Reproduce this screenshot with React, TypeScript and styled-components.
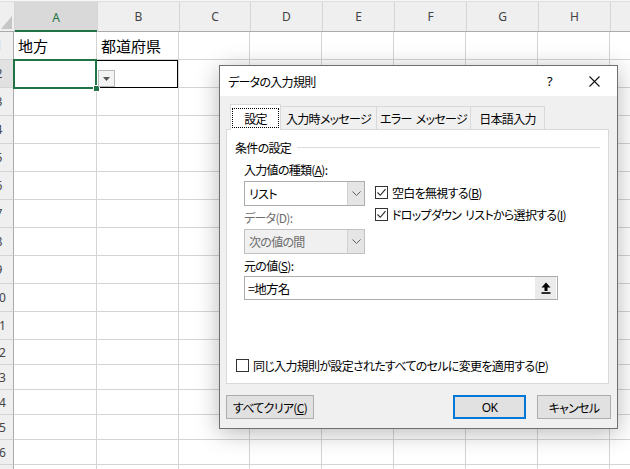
import React from 'react'
import styled, { createGlobalStyle, css } from 'styled-components'

const UI_FONT = `"Noto Sans CJK JP", "Noto Sans", sans-serif`
const GRID = '#d4d4d4'
const EXCEL_GREEN = '#217346'

const GlobalStyle = createGlobalStyle`
  html, body {
    margin: 0;
    padding: 0;
    background: #fff;
  }
  body {
    width: 630px;
    height: 469px;
    overflow: hidden;
    font-family: ${UI_FONT};
    font-feature-settings: 'palt';
  }
`

const columns = [
  { label: 'A', width: 83 },
  { label: 'B', width: 82 },
  { label: 'C', width: 71 },
  { label: 'D', width: 72 },
  { label: 'E', width: 72 },
  { label: 'F', width: 72 },
  { label: 'G', width: 72 },
  { label: 'H', width: 72 },
  { label: '', width: 40 },
]

const rowHeights = [28, 28, 28, 28, 28, 28, 28, 28, 28, 28, 28, 25, 25, 25, 25, 25, 25]

const cellText: Record<string, string> = {
  '1-0': '地方',
  '1-1': '都道府県',
}

export default function App() {
  return (
    <>
      <GlobalStyle />
      <Sheet>
        <HeaderRow>
          <Corner>
            <svg width="14" height="29" viewBox="0 0 14 29">
              <polygon points="12,14 12,27 1,27" fill="#c6c6c6" />
            </svg>
          </Corner>
          {columns.map((c, i) => (
            <ColHeader key={i} $w={c.width} $selected={c.label === 'A'}>
              {c.label}
            </ColHeader>
          ))}
        </HeaderRow>

        {rowHeights.map((h, r) => {
          const rowNo = r + 1
          return (
            <Row key={rowNo} $h={h}>
              <RowHeader $selected={rowNo === 2}>
                <RowNumber>{rowNo}</RowNumber>
              </RowHeader>
              {columns.map((c, ci) => (
                <Cell
                  key={ci}
                  $w={c.width}
                  $active={rowNo === 2 && ci === 0}
                  $boxed={rowNo === 2 && ci === 1}
                >
                  {cellText[`${rowNo}-${ci}`]}
                  {rowNo === 2 && ci === 0 && <FillHandle />}
                  {rowNo === 2 && ci === 1 && (
                    <CellDropdown>
                      <svg width="7" height="4" viewBox="0 0 7 4">
                        <polygon points="0,0 7,0 3.5,4" fill="#555" />
                      </svg>
                    </CellDropdown>
                  )}
                </Cell>
              ))}
            </Row>
          )
        })}

        <Dialog>
          <TitleBar>
            <Title>データの入力規則</Title>
            <TitleButton>?</TitleButton>
            <TitleButton>
              <svg width="11" height="11" viewBox="0 0 11 11">
                <path d="M0.5 0.5 L10.5 10.5 M10.5 0.5 L0.5 10.5" stroke="#111" strokeWidth="1.1" />
              </svg>
            </TitleButton>
          </TitleBar>

          <DialogBody>
            <TabStrip>
              <Tab $active $w={51}>
                <FocusLabel>設定</FocusLabel>
              </Tab>
              <Tab $w={97}>入力時メッセージ</Tab>
              <Tab $w={95}>エラー メッセージ</Tab>
              <Tab $w={75}>日本語入力</Tab>
            </TabStrip>

            <TabPanel>
              <SectionHeader>
                <span>条件の設定</span>
                <Rule />
              </SectionHeader>

              <Settings>
                <SettingsGrid>
                  <Column>
                    <FieldLabel $gap={6}>
                      入力値の種類(<u>A</u>):
                    </FieldLabel>
                    <Select>
                      <SelectValue>リスト</SelectValue>
                      <SelectArrow>
                        <Chevron />
                      </SelectArrow>
                    </Select>
                    <FieldLabel $gap={4} $disabled>
                      データ(D):
                    </FieldLabel>
                    <Select $disabled>
                      <SelectValue>次の値の間</SelectValue>
                      <SelectArrow>
                        <Chevron />
                      </SelectArrow>
                    </Select>
                  </Column>
                  <CheckColumn>
                    <CheckRow>
                      <CheckBox $checked>
                        <Tick />
                      </CheckBox>
                      <span>
                        空白を無視する(<u>B</u>)
                      </span>
                    </CheckRow>
                    <CheckRow>
                      <CheckBox $checked>
                        <Tick />
                      </CheckBox>
                      <span>
                        ドロップダウン リストから選択する(<u>I</u>)
                      </span>
                    </CheckRow>
                  </CheckColumn>
                </SettingsGrid>

                <FieldLabel $gap={4}>
                  元の値(<u>S</u>):
                </FieldLabel>
                <SourceInput>
                  <SourceValue>=地方名</SourceValue>
                  <CollapseButton>
                    <svg width="10" height="12" viewBox="0 0 10 12">
                      <path d="M5 0.5 L9.5 5.5 L6.5 5.5 L6.5 9 L3.5 9 L3.5 5.5 L0.5 5.5 Z" fill="#000" />
                      <rect x="0.5" y="10.2" width="9" height="1.6" fill="#000" />
                    </svg>
                  </CollapseButton>
                </SourceInput>
              </Settings>

              <Spacer />

              <ApplyRow>
                <CheckBox />
                <span>
                  同じ入力規則が設定されたすべてのセルに変更を適用する(<u>P</u>)
                </span>
              </ApplyRow>
            </TabPanel>

            <ButtonRow>
              <Button $w={88}>
                すべてクリア(<u>C</u>)
              </Button>
              <ButtonGap />
              <Button $w={73} $default>
                OK
              </Button>
              <Button $w={74}>キャンセル</Button>
            </ButtonRow>
          </DialogBody>
        </Dialog>
      </Sheet>
    </>
  )
}

const Chevron = () => (
  <svg width="9" height="5" viewBox="0 0 9 5">
    <path d="M0.5 0.5 L4.5 4.5 L8.5 0.5" fill="none" stroke="#606060" strokeWidth="1" />
  </svg>
)

const Tick = () => (
  <svg width="11" height="11" viewBox="0 0 11 11">
    <path d="M1.5 5.5 L4.3 8.3 L9.5 2.2" fill="none" stroke="#222" strokeWidth="1.1" />
  </svg>
)

const Sheet = styled.div`
  position: relative;
  width: 630px;
  height: 469px;
  overflow: hidden;
  padding-top: 2px;
  box-sizing: border-box;
  background: #f7f7f7;
`

const HeaderRow = styled.div`
  display: flex;
  height: 29px;
  background: #efefef;
  border-top: 1px solid #dedede;
  border-bottom: 1px solid #ababab;
  box-sizing: content-box;
  margin-top: -1px;
`

const Corner = styled.div`
  flex: 0 0 14px;
  box-sizing: border-box;
  border-right: 1px solid #d4d4d4;
  display: flex;
`

const ColHeader = styled.div<{ $w: number; $selected?: boolean }>`
  flex: 0 0 ${p => p.$w}px;
  box-sizing: border-box;
  border-right: 1px solid #d5d5d5;
  display: flex;
  align-items: center;
  justify-content: center;
  font-family: 'Noto Sans', 'Liberation Sans', sans-serif;
  font-size: 12px;
  color: #444;
  ${p =>
    p.$selected &&
    css`
      background: #d9d9d9;
      color: ${EXCEL_GREEN};
      box-shadow: inset 0 -2px 0 ${EXCEL_GREEN};
      margin-bottom: -1px;
    `}
`

const Row = styled.div<{ $h: number }>`
  display: flex;
  height: ${p => p.$h}px;
  background: #fff;
`

const RowHeader = styled.div<{ $selected?: boolean }>`
  flex: 0 0 14px;
  box-sizing: border-box;
  overflow: hidden;
  background: ${p => (p.$selected ? '#e1e1e1' : '#efefef')};
  border-right: 1px solid #ababab;
  border-bottom: 1px solid #d4d4d4;
  display: flex;
  align-items: center;
`

const RowNumber = styled.span`
  flex: 0 0 30px;
  margin-left: -16px;
  text-align: center;
  font-family: 'Noto Sans', 'Liberation Sans', sans-serif;
  font-size: 12px;
  color: #444;
`

const Cell = styled.div<{ $w: number; $active?: boolean; $boxed?: boolean }>`
  position: relative;
  flex: 0 0 ${p => p.$w}px;
  box-sizing: border-box;
  border-right: 1px solid ${GRID};
  border-bottom: 1px solid ${GRID};
  padding: 0 4px;
  display: flex;
  align-items: center;
  font-family: ${UI_FONT};
  font-size: 15px;
  color: #000;
  white-space: nowrap;

  ${p =>
    p.$active &&
    css`
      &::after {
        content: '';
        position: absolute;
        top: -1px;
        left: -1px;
        right: -1px;
        bottom: -2px;
        border: 2px solid ${EXCEL_GREEN};
        z-index: 2;
      }
    `}

  ${p =>
    p.$boxed &&
    css`
      &::before {
        content: '';
        position: absolute;
        top: 0;
        left: -1px;
        right: 0;
        bottom: -1px;
        border: 1px solid #000;
        z-index: 1;
      }
    `}
`

const FillHandle = styled.span`
  position: absolute;
  right: -4px;
  bottom: -5px;
  width: 5px;
  height: 5px;
  background: ${EXCEL_GREEN};
  border: 1px solid #fff;
  z-index: 3;
`

const CellDropdown = styled.span`
  position: absolute;
  left: 1px;
  top: 10px;
  width: 17px;
  height: 17px;
  box-sizing: border-box;
  background: #f3f3f3;
  border: 1px solid #b8b8b8;
  display: flex;
  align-items: center;
  justify-content: center;
  z-index: 4;
`

const Dialog = styled.div`
  position: absolute;
  left: 219px;
  top: 65px;
  width: 399px;
  height: 364px;
  box-sizing: border-box;
  border: 1px solid #707070;
  background: #f0f0f0;
  box-shadow: 0 4px 22px rgba(0, 0, 0, 0.28);
  display: flex;
  flex-direction: column;
  z-index: 10;
  font-family: ${UI_FONT};
  font-feature-settings: 'palt';
  font-size: 12px;
  letter-spacing: -0.7px;
  word-spacing: 2px;
  color: #000;
`

const TitleBar = styled.div`
  height: 30px;
  flex: 0 0 30px;
  background: #fff;
  display: flex;
  align-items: center;
`

const Title = styled.div`
  flex: 1;
  padding-left: 8px;
  font-size: 12px;
`

const TitleButton = styled.div`
  width: 45px;
  height: 30px;
  display: flex;
  align-items: center;
  justify-content: center;
  font-family: 'Noto Sans', sans-serif;
  font-size: 13px;
`

const DialogBody = styled.div`
  flex: 1;
  display: flex;
  flex-direction: column;
  padding: 8px 8px 9px 6px;
`

const TabStrip = styled.div`
  display: flex;
  align-items: flex-end;
  height: 25px;
  padding-left: 4px;
  position: relative;
  z-index: 1;
`

const Tab = styled.div<{ $w: number; $active?: boolean }>`
  box-sizing: border-box;
  width: ${p => p.$w}px;
  height: 23px;
  margin-left: -1px;
  border: 1px solid #d9d9d9;
  border-bottom: none;
  background: #f0f0f0;
  display: flex;
  align-items: center;
  justify-content: center;
  white-space: nowrap;
  font-size: 12px;

  &:first-child {
    margin-left: 0;
  }

  ${p =>
    p.$active &&
    css`
      height: 26px;
      margin-bottom: -1px;
      background: #fff;
      padding: 3px 1px 2px;
      align-items: stretch;
    `}
`

const FocusLabel = styled.span`
  flex: 1;
  border: 1px dotted #000;
  display: flex;
  align-items: center;
  justify-content: center;
`

const TabPanel = styled.div`
  height: 255px;
  box-sizing: border-box;
  background: #fff;
  border: 1px solid #d9d9d9;
  display: flex;
  flex-direction: column;
  padding: 0 8px;
`

const SectionHeader = styled.div`
  margin-top: 8px;
  height: 18px;
  display: flex;
  align-items: center;
  gap: 6px;
`

const Rule = styled.span`
  flex: 1;
  height: 1px;
  background: #dcdcdc;
`

const Settings = styled.div`
  padding-left: 9px;
  display: flex;
  flex-direction: column;
`

const SettingsGrid = styled.div`
  display: grid;
  grid-template-columns: 121px auto;
  column-gap: 10px;
`

const Column = styled.div`
  display: flex;
  flex-direction: column;
`

const FieldLabel = styled.div<{ $gap: number; $disabled?: boolean }>`
  margin-top: ${p => p.$gap}px;
  height: 16px;
  line-height: 16px;
  color: ${p => (p.$disabled ? '#6d6d6d' : '#000')};
  white-space: nowrap;
`

const Select = styled.div<{ $disabled?: boolean }>`
  margin-top: 3px;
  height: 25px;
  box-sizing: border-box;
  border: 1px solid ${p => (p.$disabled ? '#c2c2c2' : '#acacac')};
  background: ${p => (p.$disabled ? '#f0f0f0' : '#fff')};
  color: ${p => (p.$disabled ? '#6d6d6d' : '#000')};
  display: flex;
`

const SelectValue = styled.div`
  flex: 1;
  padding-left: 4px;
  display: flex;
  align-items: center;
`

const SelectArrow = styled.div`
  width: 16px;
  background: #e5e5e5;
  border-left: 1px solid #d0d0d0;
  display: flex;
  align-items: center;
  justify-content: center;
`

const CheckColumn = styled.div`
  margin-top: 25px;
  display: flex;
  flex-direction: column;
`

const CheckRow = styled.div`
  height: 22px;
  display: flex;
  align-items: center;
  gap: 4px;
  white-space: nowrap;
`

const CheckBox = styled.span<{ $checked?: boolean }>`
  width: 13px;
  height: 13px;
  flex: 0 0 13px;
  box-sizing: border-box;
  border: 1px solid #333;
  background: #fff;
  display: flex;
  align-items: center;
  justify-content: center;
`

const SourceInput = styled.div`
  margin-top: 2px;
  width: 314px;
  height: 24px;
  box-sizing: border-box;
  border: 1px solid #acacac;
  display: flex;
  align-items: stretch;
`

const SourceValue = styled.div`
  flex: 1;
  padding-left: 3px;
  display: flex;
  align-items: center;
  font-size: 12.5px;
`

const CollapseButton = styled.div`
  width: 21px;
  margin: 0 1px 0 0;
  background: #ebebeb;
  border-left: 2px solid #fff;
  display: flex;
  align-items: center;
  justify-content: center;
`

const Spacer = styled.div`
  flex: 1;
`

const ApplyRow = styled.div`
  height: 16px;
  margin: 0 0 10px 1px;
  display: flex;
  align-items: center;
  gap: 4px;
  white-space: nowrap;
`

const ButtonRow = styled.div`
  margin-top: 11px;
  margin-right: -2px;
  height: 24px;
  display: flex;
  gap: 11px;
`

const ButtonGap = styled.div`
  flex: 1;
`

const Button = styled.div<{ $w: number; $default?: boolean }>`
  width: ${p => p.$w}px;
  box-sizing: border-box;
  background: #e1e1e1;
  border: 1px solid #adadad;
  display: flex;
  align-items: center;
  justify-content: center;
  white-space: nowrap;
  font-size: 12px;

  ${p =>
    p.$default &&
    css`
      border: 2px solid #0078d7;
      font-family: 'Noto Sans', sans-serif;
    `}
`
